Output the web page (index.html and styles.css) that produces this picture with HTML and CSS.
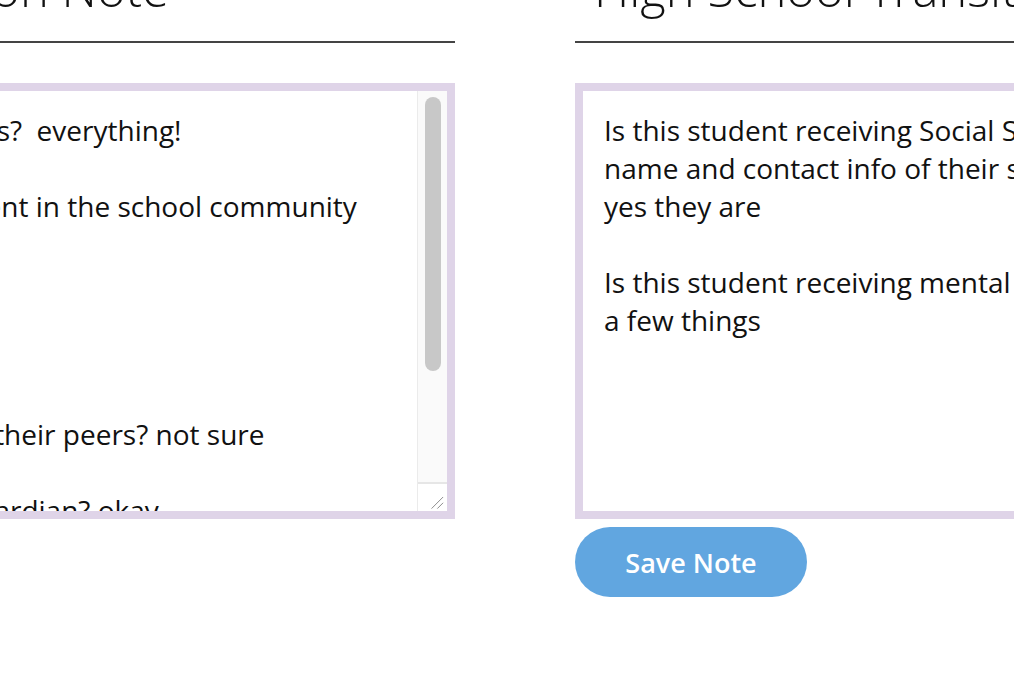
FILE: index.html
```html
<!DOCTYPE html>
<html lang="en">
<head>
<meta charset="utf-8">
<title>Transition Notes</title>
<link rel="stylesheet" href="styles.css">
</head>
<body>
<main class="notes">
  <section class="note">
    <h2 class="note-title">School Transition Note</h2>
    <div class="note-box">
      <div class="note-text">Which are their strengths?  everything!

Their levels of involvement in the school community
very involved

Any concerns?
none

Do teens get along with their peers? not sure

Relationship with the guardian? okay
</div>
      <div class="scrollbar">
        <div class="scroll-track"><div class="scroll-thumb"></div></div>
        <div class="resizer">
          <svg width="30" height="29" viewBox="0 0 30 29"><path d="M14 27 L26 15 M20 27 L26 21" stroke="#8a8a8a" stroke-width="1" fill="none"/></svg>
        </div>
      </div>
    </div>
  </section>
  <section class="note">
    <h2 class="note-title">High School Transition Note</h2>
    <div class="note-box">
      <div class="note-text">Is this student receiving Social Security benefits? If so, list the
name and contact info of their social worker.
yes they are

Is this student receiving mental health services? If so, list them.
a few things</div>
    </div>
    <button class="save-btn" type="button">Save Note</button>
  </section>
</main>
</body>
</html>
```
FILE: styles.css
```css
html, body {
  margin: 0;
  padding: 0;
  background: #ffffff;
  overflow: hidden;
}

body {
  font-family: "Open Sans", "Liberation Sans", sans-serif;
  color: #111111;
}

.notes {
  display: flex;
  gap: 120px;
  margin: -42px 0 0 -349px;
  width: 1728px;
}

.note {
  width: 804px;
  flex: none;
  display: flex;
  flex-direction: column;
  align-items: flex-start;
}

.note-title {
  align-self: stretch;
  margin: 0 0 40px 0;
  padding: 0 0 23px 19px;
  font-size: 49px;
  line-height: 60px;
  font-weight: 300;
  color: #111111;
  border-bottom: 2px solid #444444;
  white-space: nowrap;
}

.note-box {
  align-self: stretch;
  display: flex;
  height: 420px;
  border: 8px solid #dfd4e8;
  background: #ffffff;
  overflow: hidden;
}

.note-text {
  flex: 1;
  padding: 20px 21px;
  font-size: 28px;
  line-height: 38px;
  white-space: pre;
  overflow: hidden;
  color: #111111;
}

.scrollbar {
  width: 30px;
  flex: none;
  display: flex;
  flex-direction: column;
  border-left: 1px solid #ebebeb;
  box-sizing: border-box;
}

.scroll-track {
  flex: 1;
  background: #fafafa;
  padding: 6px 0 0 7px;
}

.scroll-thumb {
  width: 16px;
  height: 274px;
  border-radius: 8px;
  background: #c8c8c8;
}

.resizer {
  height: 29px;
  flex: none;
  background: #ffffff;
  border-top: 2px solid #e6e6e6;
  box-sizing: border-box;
  display: flex;
  align-items: flex-end;
}

.resizer svg {
  display: block;
}

.save-btn {
  margin-top: 8px;
  width: 232px;
  height: 70px;
  border: none;
  border-radius: 35px;
  background: #61a6e0;
  color: #ffffff;
  font-family: "Open Sans", "Liberation Sans", sans-serif;
  font-size: 27px;
  font-weight: 600;
  padding: 0;
  cursor: pointer;
}
```
